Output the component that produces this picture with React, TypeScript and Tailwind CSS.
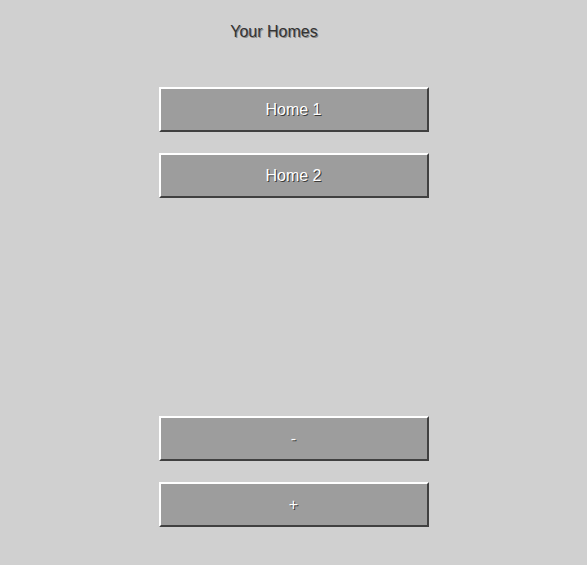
const homes = ["Home 1", "Home 2"];

function PanelButton({ label }: { label: string }) {
  return (
    <button className="h-[45px] w-[270px] border-2 border-t-white border-l-white border-r-[#404040] border-b-[#404040] bg-[#9d9d9d] text-[16px] text-white [text-shadow:1px_1px_0_#3a3a3a]">
      {label}
    </button>
  );
}

export default function App() {
  return (
    <div className="flex h-[565px] w-[587px] flex-col items-center bg-[#d0d0d0] font-['Liberation_Sans',Arial,sans-serif]">
      <h1 className="mt-[22px] mr-[39px] text-[16px] leading-[20px] text-[#333] [text-shadow:1px_1px_0_#8a8a8a]">
        Your Homes
      </h1>
      <div className="mt-[45px] flex flex-col gap-[21px]">
        {homes.map((h) => (
          <PanelButton key={h} label={h} />
        ))}
      </div>
      <div className="mt-[218px] flex flex-col gap-[21px]">
        <PanelButton label="-" />
        <PanelButton label="+" />
      </div>
    </div>
  );
}
